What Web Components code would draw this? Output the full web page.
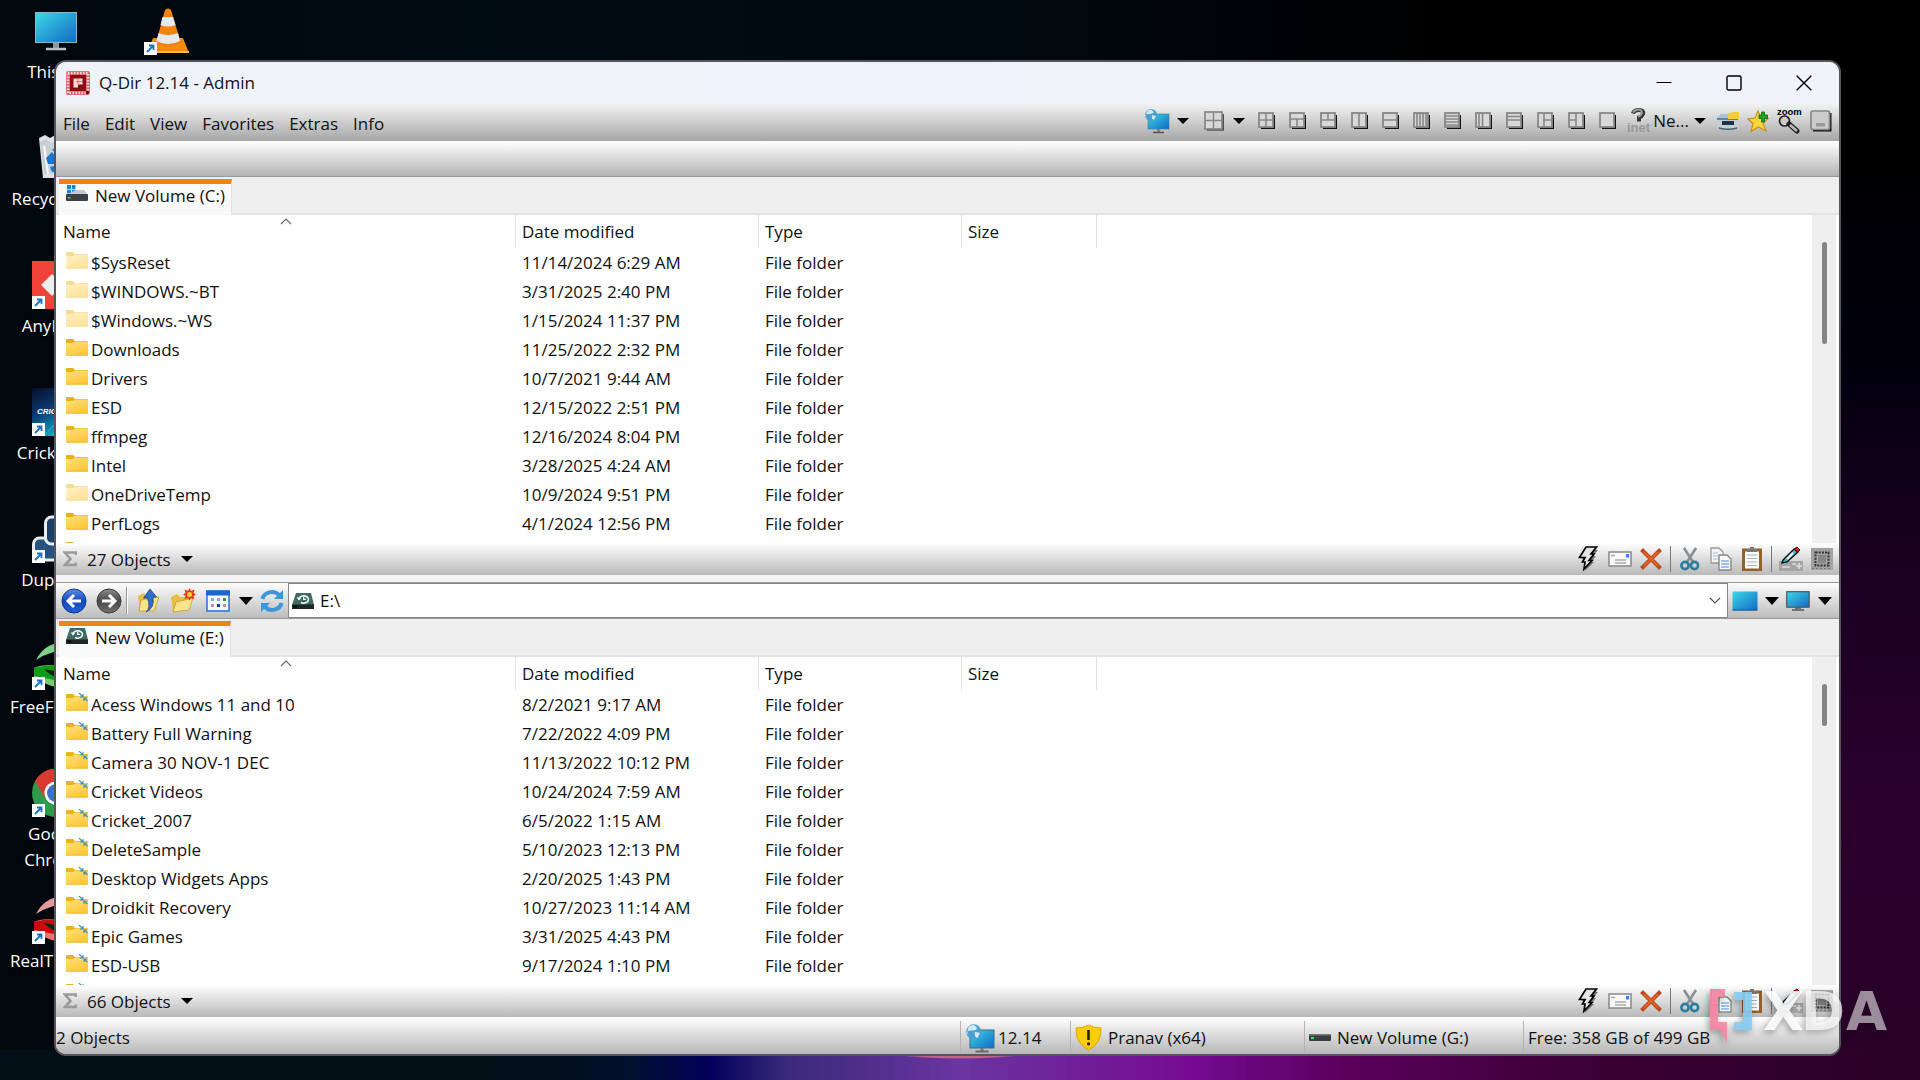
<!DOCTYPE html>
<html lang="en">
<head>
<meta charset="utf-8">
<title>Q-Dir 12.14 - Admin</title>
<style>
  html, body { margin: 0; height: 100%; }
  body { font: 17px/26px "Open Sans", "Noto Sans", sans-serif; color: #111; background: #000; overflow: hidden; }
</style>
</head>
<body>
<q-desktop>
  <q-shortcut icon="pc">This PC</q-shortcut>
  <q-shortcut icon="bin">Recycle Bin</q-shortcut>
  <q-shortcut icon="anydesk" linked>AnyDesk</q-shortcut>
  <q-shortcut icon="cricket" linked>Cricket 07</q-shortcut>
  <q-shortcut icon="dup" linked>Duplicati</q-shortcut>
  <q-shortcut icon="syncgreen" linked>FreeFileSync</q-shortcut>
  <q-shortcut icon="chrome" linked>Google Chrome</q-shortcut>
  <q-shortcut icon="syncred" linked>RealTimeSync</q-shortcut>
  <q-shortcut icon="vlc" linked></q-shortcut>
  <q-window slot="window" heading="Q-Dir 12.14 - Admin">
    <q-pane volume="New Volume (C:)" icon="drivec" count="27 Objects" list="c" thumb="102"></q-pane>
    <q-address path="E:\"></q-address>
    <q-pane volume="New Volume (E:)" icon="drivee" count="66 Objects" list="e" thumb="42"></q-pane>
  </q-window>
  <q-watermark slot="overlay"></q-watermark>
</q-desktop>

<script>
const SHADOW = '#111';
const lay = inner => [17, 17, `<path d="M3 16.200H16.200V3" fill="none" stroke="${SHADOW}" stroke-width="1.800"/><rect x="1" y="1" width="14" height="14" fill="#d8d8d8" stroke="#888" stroke-width="1.800"/><path d="${inner}" stroke="#888" stroke-width="1.600" fill="none"/>`];
const folder = (a, b, t, extra = '') => [22, 20, `<defs><linearGradient id="f" x2=".6" y2="1"><stop stop-color="${a}"/><stop offset="1" stop-color="${b}"/></linearGradient></defs><path d="M0 1.500Q0 1 1 1H7L9 3H22V8H0Z" fill="${t}"/><path d="M0 5H7L9 3.500H22V17.500H0Z" fill="url(#f)"/><path d="M0 17.200H22" stroke="${t}" stroke-width=".8"/>${extra}`];
const screen = `<defs><linearGradient id="s" x2="1" y2="1"><stop stop-color="#3cd8e6"/><stop offset="1" stop-color="#1268c4"/></linearGradient></defs>`;
const driveE = `<path d="M4 2H19L22 14H0Z" fill="#3f6b62"/><path d="M0 13.500H22V18H0Z" fill="#1d2623"/><path d="M1.500 15.500H5" stroke="#000" stroke-width="1.500"/><path d="M7 7.500a4.800 3.700 0 1 1 2 4" fill="none" stroke="#fff" stroke-width="1.500"/><path d="M4.500 6.500L7 9.500L9.500 6.800Z" fill="#fff"/><path d="M11.700 5.500V8.300H14" fill="none" stroke="#fff" stroke-width="1.200"/>`;
const globe = `<circle cx="7" cy="7" r="6" fill="#4a9ed0"/><path d="M3 3Q7 0 9 3T5 6T3 10Q1 7 3 3ZM8 7L12 8L10 12Q7 11 8 7Z" fill="#cfeaf6"/>`;
const eye = (a, b, c) => [48, 48, `<path d="M4 18Q12 2 30 0H48V8Q22 6 4 18Z" fill="${b}"/><path d="M2 26Q14 20 46 26V46Q20 48 2 36Z" fill="${a}"/><path d="M2 26Q24 20 46 26L22 38L2 34Z" fill="${c}"/><path d="M12 27L28 30V36Q18 34 12 27Z" fill="#021"/>`];
const ICONS = {
  pc: [48, 48, `${screen}<path d="M21 34h6v7h-6z" fill="#8a969e"/><rect x="3.500" y="5.500" width="41" height="30" fill="url(#s)" stroke="#8fb4c4"/><path d="M14 42H34" stroke="#b9c0c4" stroke-width="2.500"/>`],
  bin: [48, 48, `<path d="M7 4L13 1L18 4L25 0L32 4L41 2L44 8L39 44H11Z" fill="#dfe3e6"/><path d="M8 8L14 5L20 9L28 5L40 8L37 40H12Z" fill="#c9cfd4"/><path d="M12 12L16 40M25 10V18M36 12L34 38" stroke="#f8f8f8" stroke-width="2"/><path d="M14 24l6-6 5 6-3 6h-6zM18 33l8-2 3 6-9 1zM28 20l7 3-2 8-6-3zM20 16l5-4 5 4-3 4z" fill="#1976cf"/>`],
  anydesk: [48, 48, `<path d="M0 0H48V48H0Z" fill="#f0433a"/><path d="M20 13L31 24L20 35L9 24Z" fill="#eee"/><path d="M27 13L38 24L27 35L33 24Z" fill="#eee"/>`],
  cricket: [48, 48, `<defs><linearGradient id="k" x2=".5" y2="1"><stop stop-color="#060d28"/><stop offset=".5" stop-color="#0b3c74"/><stop offset="1" stop-color="#0fb0c8"/></linearGradient></defs><path d="M0 0H48V48H0Z" fill="url(#k)"/><path d="M12 48Q28 26 48 30M20 48Q32 36 48 40" stroke="#2adfe0" fill="none" opacity=".6"/><text x="5" y="26" font-family="Liberation Sans" font-size="8" font-weight="700" font-style="italic" fill="#fff">CRICKET</text>`],
  dup: [48, 48, `<rect x="1.500" y="23" width="34" height="22" rx="6" fill="#27527e" stroke="#e8edf4" stroke-width="3"/><rect x="13.500" y="2" width="33" height="27" rx="6" fill="#1e4066" stroke="#e8edf4" stroke-width="3"/>`],
  syncgreen: eye('#78c878', '#7fcf84', '#0d9a14'),
  syncred: eye('#ee7474', '#e49a9a', '#c40a0a'),
  chrome: [48, 48, `<circle cx="24" cy="24" r="24" fill="#2e9a4a"/><path d="M3 12A24 24 0 0 1 45 12L24 24L13 29Z" fill="#d93a32"/><path d="M45 12A24 24 0 0 1 24 48L34 28L24 13Z" fill="#fbc116"/><circle cx="24" cy="24" r="11.500" fill="#fff"/><circle cx="24" cy="24" r="9" fill="#3a6fd8"/>`],
  vlc: [48, 48, `<path d="M9 31H39L45 46H3Z" fill="#f08a10"/><path d="M3 44H45V46H3Z" fill="#ffc030"/><path d="M21 3Q24 0 27 3L37 36Q24 43 12 36Z" fill="#f5820a"/><path d="M18.500 10H29L31.500 18Q24 21 16.500 18Z" fill="#e6e9ee"/><path d="M14.500 26Q24 30 34 26L36 34Q24 40 12.500 34Z" fill="#e6e9ee"/>`],
  link: [13, 13, `<path d="M0 0H13V13H0Z" fill="#fff"/><path d="M3 10L9 4M5 3.500H9.500V8" fill="none" stroke="#1673c8" stroke-width="1.800"/>`],
  app: [24, 24, `<rect width="24" height="24" rx="2" fill="#e4606a"/><rect x="2" y="2" width="20" height="20" fill="none" stroke="#ffd8d8" stroke-width="2.500" stroke-dasharray="1.500 1.500"/><rect x="4" y="4" width="16" height="16" fill="#8c0d15"/><path d="M7.500 7.500H16.500V13.500H12V16.500H7.500Z" fill="#ffd9d9"/><path d="M10 10.500H16M12 8V13" stroke="#e06a70"/><circle cx="21.500" cy="21.500" r="1.800" fill="#70000a"/>`],
  min: [16, 16, `<path d="M.5 7.500H15.500" stroke="#000" stroke-width="1"/>`],
  max: [16, 16, `<rect x="1" y="1" width="14" height="14" rx="1.500" fill="none" stroke="#000" stroke-width="1.400"/>`],
  close: [16, 16, `<path d="M.7.7L15.300 15.300M15.300.7L.7 15.300" stroke="#000" stroke-width="1.400"/>`],
  down: [12, 6, `<path d="M0 0H12L6 6Z" fill="#000"/>`],
  bigdown: [14, 8, `<path d="M0 0H14L7 8Z" fill="#000"/>`],
  chev: [12, 7, `<path d="M1 1L6 6L11 1" fill="none" stroke="#555" stroke-width="1.200"/>`],
  sort: [12, 7, `<path d="M1 6L6 1L11 6" fill="none" stroke="#666" stroke-width="1.100"/>`],
  netpc: [26, 26, `${screen}<rect x="4" y="6" width="21" height="15" fill="url(#s)" stroke="#3b7fa0" stroke-width=".6"/><path d="M14.500 21V24" stroke="#777" stroke-width="2.500"/><path d="M9 24.500H20" stroke="#555" stroke-width="1.300"/>${globe}`],
  netpcbig: [30, 30, `${screen}<rect x="5" y="7" width="24" height="18" fill="url(#s)" stroke="#3b6f90" stroke-width="1"/><path d="M17 25V28" stroke="#777" stroke-width="3"/><path d="M10.500 28.500H23.500" stroke="#666" stroke-width="2"/><g transform="scale(1.25)">${globe}</g>`],
  quad: [20, 20, `<path d="M3 18.700H19V3" fill="none" stroke="#222" stroke-width="1.500"/><rect x="1" y="1" width="17" height="17" fill="#d8d8d8" stroke="#888" stroke-width="1.700"/><path d="M9.500 1V18M1 9.500H18" stroke="#888" stroke-width="1.500"/>`],
  l0: lay('M8 1V15M1 8H15'), l1: lay('M1 7H15M8 7V15'), l2: lay('M1 8H15M8 1V8'), l3: lay('M8 1V15'),
  l4: lay('M1 8H15'), l5: lay('M4 1V15M7 1V15M10 1V15M13 1V15'), l6: lay('M1 4H15M1 7H15M1 10H15M1 13H15'),
  l7: lay('M4 1V15M7.500 1V15'), l8: lay('M1 4.500H15M1 8H15'), l9: lay('M7 1V15M7 8H15'), l10: lay('M8 1V15M1 8H8'), l11: lay('M1 1'),
  inet: [24, 26, `<path d="M6 5.500Q7 2 12 2Q17 2 16 6Q15 8.500 12 9.500V13.500" fill="none" stroke="#333" stroke-width="4"/><path d="M6 4.500Q8 1.500 12 1.500Q15 2 15 5Q14 8 11 9" fill="none" stroke="#999" stroke-width="2"/><text x="0" y="24" font-family="Liberation Sans" font-size="13" font-weight="700" fill="#999">inet</text>`],
  layers: [24, 22, `<path d="M1 8L5 4H20L22 8Z" fill="#a9c2d4"/><path d="M1 8H22V10H1Z" fill="#5c86a8"/><path d="M3 10H21L23 16Q20 20 12 19.500Q4 20 1 16Z" fill="#c3ced6"/><path d="M3 18Q12 20.500 21 18" stroke="#49606f" fill="none" stroke-width="1.500"/><rect x="6" y="11" width="12" height="4" fill="#1d3548"/><path d="M12 3H15L16 2H23V9H12Z" fill="#fbc93a"/>`],
  star: [24, 24, `<path d="M11 2L14 9L21 9.500L16 14.500L19 22L11.500 18L4 22.500L6 14.500L1 10L8 9Z" fill="#fbd33c" stroke="#c89018" stroke-width="1.200"/><path d="M12 6H14.500V3H17.500V6H20.500V9.500H17.500V13H14.500V9.500H12Z" fill="#1fa51f" stroke="#086a08" stroke-width=".8"/>`],
  zoom: [26, 26, `<text x="0" y="7" font-family="Liberation Sans" font-size="9.500" font-weight="700" fill="#000">zoom</text><circle cx="7.500" cy="13" r="5" fill="#ccc" stroke="#222" stroke-width="1.700"/><path d="M12 16L20 23" stroke="#222" stroke-width="5" stroke-linecap="round"/><path d="M13 17L20 23" stroke="#bbb" stroke-width="2.500"/>`],
  tray: [22, 22, `<path d="M3 20.500H20.500V3" fill="none" stroke="#111" stroke-width="2"/><rect x="1" y="1" width="18.500" height="18.500" rx="2" fill="#ccc" stroke="#888" stroke-width="1.700"/><path d="M6 13H15V16.500H6Z" fill="#999"/>`],
  drivec: [22, 20, `<path d="M1 1H5V5H1ZM5.800 1H9.500V5H5.800ZM1 5.800H5V9.500H1ZM5.800 5.800H9.500V9.500H5.800Z" fill="#1687d8"/><path d="M10 6H18L22 11H0Z" fill="#c4c8cc"/><rect y="10" width="22" height="7" rx="1" fill="#3c4043"/><rect x="2" y="13" width="2.500" height="1.500" fill="#5fd070"/>`],
  drivee: [22, 20, driveE],
  driveg: [22, 10, `<rect y="1" width="22" height="7" rx="1" fill="#3c3f42"/><rect x="0" y="1" width="22" height="1.500" fill="#777"/><rect x="2" y="4" width="3" height="2" fill="#3fe060"/>`],
  folder: folder('#ffe082', '#ffc738', '#e9b21c'),
  faded: folder('#fff0c4', '#ffe39a', '#f5dc96'),
  packed: folder('#ffe07e', '#ffc838', '#eab320', `<path d="M13 0L16.500 3.500M17 1V4H14M21.500 8L18.500 5.500M18 8V5H21" fill="none" stroke="#3e8fb0" stroke-width="1.100"/>`),
  sigma: [14, 16, `<path d="M13 4V1.500H2L7.500 8L2 14H13V11.500" fill="none" stroke="#9a9a9a" stroke-width="2.600"/>`],
  bolt: [22, 26, `<path d="M10 3L20 4L15 10H18L13 16H16L7 25L9 17H7L9 13H4Z" fill="#777"/><path d="M8 1H18.500L13 8H16L11 14.500H14L6 23L7 16H4.500L7 11.500H1.500Z" fill="#e6e6e6" stroke="#000" stroke-width="1.700"/>`],
  mail: [24, 16, `<rect x="1" y="1" width="22" height="14" fill="#f8f8f8" stroke="#888" stroke-width="1.500"/><rect x="18" y="3" width="3" height="3.500" fill="#2f86e0"/><path d="M3 4.500H7M7 9H18M7 12H18" stroke="#aaa" stroke-width="1.300"/>`],
  del: [22, 22, `<path d="M1.500 1.500L20.500 20.500M20.500 1.500L1.500 20.500" stroke="#b94d22" stroke-width="4"/><path d="M4 4L18 18M18 4L4 18" stroke="#dd6226" stroke-width="2"/>`],
  cut: [20, 24, `<path d="M4 1L13 15M16 1L7 15" stroke="#8a8f94" stroke-width="2.600"/><circle cx="5" cy="18.500" r="3.600" fill="none" stroke="#2a7d9e" stroke-width="2.600"/><circle cx="14.500" cy="18.500" r="3.600" fill="none" stroke="#2a7d9e" stroke-width="2.600"/>`],
  copy: [22, 24, `<path d="M1 1H9L13 5V16H1Z" fill="#f4f4f4" stroke="#999" stroke-width="1.300"/><path d="M3 6H8M3 9H8M3 12H8" stroke="#9cc0e8"/><path d="M9 8H17L21 12V23H9Z" fill="#fafafa" stroke="#888" stroke-width="1.400"/><path d="M11 14H19M11 17H19M11 20H19" stroke="#4a86dc" stroke-width="1.200"/>`],
  paste: [20, 24, `<rect x="1.500" y="3" width="17" height="20" fill="#fcfcfc" stroke="#96602c" stroke-width="3"/><path d="M5 8H15M5 11.500H15M5 15H15M5 18.500H15" stroke="#9cb4cc" stroke-width="1.200"/><path d="M5 2H8V0H12V2H15V5H5Z" fill="#777"/>`],
  pen: [24, 26, `<path d="M0 15H24V25H0Z" fill="#a4a4a4"/><path d="M3 21H11M13 18H17M20 17V23M17 20H23" stroke="#ddd" stroke-width="1.500"/><path d="M4 14L15 3L19 6L8 16L3 17Z" fill="#4ab4c8" stroke="#000" stroke-width="1.300"/><path d="M8 13L14 7" stroke="#fff" stroke-width="2"/><path d="M15 3L18 1L21 4L19 6Z" fill="#e02020" stroke="#400" stroke-width="1"/>`],
  select: [22, 22, `<rect width="22" height="22" fill="#a2a2a2"/><rect x="4.500" y="4.500" width="13" height="13" fill="none" stroke="#333" stroke-width="2" stroke-dasharray="2 1.200"/><rect x="7" y="7" width="8" height="8" fill="#858585"/><path d="M1 20.500H21" stroke="#777" stroke-dasharray="2 2"/>`],
  back: [26, 26, `<defs><linearGradient id="b" x2="0" y2="1"><stop stop-color="#5a90e8"/><stop offset=".5" stop-color="#1747b8"/><stop offset="1" stop-color="#1e60d8"/></linearGradient></defs><circle cx="13" cy="13" r="12" fill="url(#b)" stroke="#12358c"/><path d="M20 13H8M13 7L7 13L13 19" fill="none" stroke="#fff" stroke-width="3"/>`],
  fwd: [26, 26, `<defs><linearGradient id="b" x2="0" y2="1"><stop stop-color="#8c8c8c"/><stop offset=".5" stop-color="#484848"/><stop offset="1" stop-color="#707070"/></linearGradient></defs><circle cx="13" cy="13" r="12" fill="url(#b)" stroke="#3c3c3c"/><path d="M6 13H18M13 7L19 13L13 19" fill="none" stroke="#fff" stroke-width="3"/>`],
  up: [24, 26, `<path d="M2 8L8 5L10 8H20V22L4 23Z" fill="#e8bf40"/><path d="M5 12L23 9L18 23H3Z" fill="#fbe48a" stroke="#c89a28" stroke-width=".8"/><path d="M10 24Q15 20 11.500 10H7.500L14 1L20.500 9H17Q19 20 10 24Z" fill="#2e6cc8" stroke="#1c4688" stroke-width=".8"/>`],
  newf: [26, 26, `<path d="M1 9L7 6L10 9H18V22L3 23Z" fill="#e8bf40"/><path d="M6 14L23 10L19 22L3 24Z" fill="#fbe48a" stroke="#c89a28" stroke-width=".8"/><path d="M19.500 0L21 3L24.500 1.500L23.500 5L26 6.500L23.500 8L24.500 11L21 10L19.500 12.500L18 10L14.500 11L15.500 8L13 6.500L15.500 5L14.500 1.500L18 3Z" fill="#e83818"/><circle cx="19.500" cy="6.500" r="2.500" fill="#ffd030"/>`],
  view: [24, 22, `<rect x="1" y="1" width="22" height="20" fill="#f4f8ff" stroke="#2d78d8" stroke-width="1.600"/><path d="M0 3H24" stroke="#1c66d0" stroke-width="5"/><path d="M5 8H8V11H5ZM11 8H14V11H11Z" fill="#8ab0c8"/><path d="M17 8H20V11H17Z" fill="#2fa030"/><path d="M5 14H8V17H5ZM17 14H20V17H17Z" fill="#c89090"/><path d="M11 14H14V17H11Z" fill="#1c3ca8"/>`],
  refresh: [24, 24, `<path d="M2.500 10A9.500 8.500 0 0 1 19 6M21.500 14A9.500 8.500 0 0 1 5 18" fill="none" stroke="#3c96dc" stroke-width="4"/><path d="M23 1V10H14ZM1 23V14H10Z" fill="#3c96dc"/>`],
  desk: [26, 20, `${screen}<rect x=".5" y=".5" width="25" height="19" rx="1" fill="url(#s)"/><path d="M.5 19H25.500" stroke="#0b568c"/>`],
  monitor: [24, 20, `${screen}<rect x=".7" y=".7" width="22.500" height="15.500" fill="url(#s)" stroke="#555" stroke-width="1.200"/><path d="M9 17H15M6 19H18" stroke="#555" stroke-width="1.300"/>`],
  shield: [27, 27, `<path d="M13.500 1Q19 4 26 4Q27 19 13.500 26Q0 19 1 4Q8 4 13.500 1Z" fill="#fccc0c" stroke="#e0a800"/><path d="M13.500 6V16" stroke="#222" stroke-width="2.600"/><circle cx="13.500" cy="19.800" r="1.600" fill="#222"/>`]
};

const define = (name, build) => customElements.define(name, class extends HTMLElement {
  connectedCallback() {
    if (this.shadowRoot) return;
    const t = document.createElement('template');
    t.innerHTML = build(this);
    this.attachShadow({ mode: 'open' }).append(t.content.cloneNode(true));
  }
});
const icon = n => `<q-icon name="${n}"></q-icon>`;
const RESET = `*{box-sizing:border-box} button{font:inherit;color:inherit;background:none;border:0;margin:0;padding:0;display:flex;align-items:center;justify-content:center}`;

define('q-icon', el => {
  const [w, h, body] = ICONS[el.getAttribute('name')];
  return `<style>:host{display:block;flex:none;width:${w}px;height:${h}px}svg{display:block}</style><svg width="${w}" height="${h}" viewBox="0 0 ${w} ${h}" aria-hidden="true">${body}</svg>`;
});

define('q-tool', el => `<style>${RESET}:host{display:flex;flex:none;width:31px}button{width:100%;height:100%}</style>
  <button aria-label="${el.getAttribute('name')}">${icon(el.getAttribute('name'))}</button>`);

define('q-shortcut', el => `<style>
  :host{display:block;width:112px;height:127px;color:#fff;text-align:center}
  a{display:block;color:inherit;text-decoration:none;padding-top:7px}
  .pic{position:relative;width:48px;margin:0 auto 4px}
  .badge{position:absolute;left:0;bottom:0}
  span{display:block;padding:0 10px;text-shadow:0 1px 2px #000}
  </style><a href="#"><div class="pic">${icon(el.getAttribute('icon'))}${el.hasAttribute('linked') ? `<q-icon class="badge" name="link"></q-icon>` : ''}</div><span><slot></slot></span></a>`);

define('q-desktop', () => `<style>
  :host{display:block;position:relative;height:100vh;overflow:hidden;
    background:
      radial-gradient(ellipse 75px 8px at 50% 1px,#c0648c 85%,transparent) bottom/100% 30px no-repeat,
      linear-gradient(90deg,#030f16,#020f18 28%,#021030 33%,#02005a 37%,#3a2a7a 41%,#6a35a0 50%,#750b92 62%,#5a005c 70%,#3c0036 82%,#280026) bottom/100% 30px no-repeat,
      linear-gradient(180deg,#000 15%,#02000e 35%,#18001f 50%,#2a002d 75%,#280026) right/90px 100% no-repeat,
      linear-gradient(90deg,#00070d,#000c14 25%,#00080e 55%,#000 75%)}
  .icons{display:flex;flex-flow:column wrap;height:1016px;align-content:flex-start}
  </style><div class="icons"><slot></slot></div><slot name="window"></slot><slot name="overlay"></slot>`);

define('q-window', el => `<style>${RESET}
  :host{position:absolute;left:54px;right:79px;top:60px;bottom:24px;display:flex;flex-direction:column;box-sizing:border-box;
    border:2px solid #55555b;border-radius:12px;overflow:hidden;background:#efefef}
  .title{display:flex;align-items:center;height:42px;padding-left:10px;background:linear-gradient(90deg,#eef3fa,#f1f2fa)}
  .title b{font-weight:400;margin-left:9px;flex:1}
  .title button{width:70px;height:42px}
  .menu{display:flex;align-items:flex-start;height:37px;padding:0 3px 0 0;background:linear-gradient(#f2f2f4,#d4d4d4 40%,#a6a6a6)}
  nav{display:flex;flex:1}
  nav button{padding:2px 7px 0 8px;height:37px}
  nav button:first-child{padding-left:7px}
  .tools{display:flex;height:33px}
  .tools .w28{width:28px}.tools .w24{width:24px}.tools .w26{width:26px}
  .tools .gap{margin-right:6px}
  .tools button{width:34px}
  .bar{height:36px;background:linear-gradient(#fff,#b4b4b4);border-bottom:1px solid #999}
  ::slotted(q-pane){flex:1 1 0;min-height:0}
  .status{display:flex;height:37px;background:linear-gradient(#fff,#b6b6b6)}
  .status div{display:flex;align-items:center;gap:3px;border-left:1px solid #b4b4b4;padding-left:4px;margin-top:4px}
  .status .first{flex:1;border:0;padding-left:0}
  .w110{width:110px}.w234{width:234px}.w219{width:219px}.w316{width:316px}
  .status .w234,.status .w219{gap:6px}
  </style>
  <div class="title">${icon('app')}<b>${el.getAttribute('heading')}</b>
    <button aria-label="Minimize">${icon('min')}</button><button aria-label="Maximize">${icon('max')}</button><button aria-label="Close">${icon('close')}</button></div>
  <div class="menu"><nav>${['File', 'Edit', 'View', 'Favorites', 'Extras', 'Info'].map(m => `<button>${m}</button>`).join('')}</nav>
    <div class="tools"><q-tool class="w28" name="netpc"></q-tool><q-tool class="w24 gap" name="down"></q-tool><q-tool class="w26" name="quad"></q-tool><q-tool class="w24" name="down"></q-tool>
    ${[...Array(12).keys()].map(i => `<q-tool name="l${i}"></q-tool>`).join('')}
    <q-tool name="inet"></q-tool><button>Ne...</button><q-tool class="w24" name="down"></q-tool>
    <q-tool name="layers"></q-tool><q-tool name="star"></q-tool><q-tool name="zoom"></q-tool><q-tool name="tray"></q-tool></div></div>
  <div class="bar"></div>
  <slot></slot>
  <div class="status"><div class="first">2 Objects</div><div class="w110">${icon('netpcbig')}12.14</div><div class="w234">${icon('shield')}Pranav (x64)</div>
    <div class="w219">${icon('driveg')}New Volume (G:)</div><div class="w316">Free: 358 GB of 499 GB</div></div>`);

define('q-address', el => `<style>${RESET}
  :host{display:block;border-top:7px solid #f4f4f4}
  .row{display:flex;height:37px;border:solid #999;border-width:1px 0;background:linear-gradient(#fdfdfd,#bcbcbc);padding-right:2px}
  .w36{width:36px}.w34{width:34px}.w20{width:20px}.w24{width:24px}
  i{width:2px;margin:4px 2px 4px 0;background:#999;border-right:1px solid #fff}
  label{display:flex;flex:1;align-items:center;gap:6px;background:#fff;border:1px solid #888;padding:0 6px 0 3px;margin-left:1px}
  input{font:inherit;color:inherit;border:0;outline:0;padding:0;background:none;flex:1;min-width:0}
  </style><div class="row"><q-tool class="w36" name="back"></q-tool><q-tool class="w34" name="fwd"></q-tool><i></i><q-tool class="w36" name="up"></q-tool><q-tool class="w34" name="newf"></q-tool>
  <q-tool class="w36" name="view"></q-tool><q-tool class="w20" name="bigdown"></q-tool><q-tool name="refresh"></q-tool>
  <label>${icon('drivee')}<input type="text" aria-label="Address" value="${el.getAttribute('path')}"><button aria-label="History">${icon('chev')}</button></label>
  <q-tool class="w34" name="desk"></q-tool><q-tool class="w20" name="bigdown"></q-tool><q-tool name="monitor"></q-tool><q-tool class="w24" name="bigdown"></q-tool></div>`);

const LISTS = {
  c: [['faded', '$SysReset', '11/14/2024 6:29 AM'], ['faded', '$WINDOWS.~BT', '3/31/2025 2:40 PM'], ['faded', '$Windows.~WS', '1/15/2024 11:37 PM'],
    ['folder', 'Downloads', '11/25/2022 2:32 PM'], ['folder', 'Drivers', '10/7/2021 9:44 AM'], ['folder', 'ESD', '12/15/2022 2:51 PM'],
    ['folder', 'ffmpeg', '12/16/2024 8:04 PM'], ['folder', 'Intel', '3/28/2025 4:24 AM'], ['faded', 'OneDriveTemp', '10/9/2024 9:51 PM'],
    ['folder', 'PerfLogs', '4/1/2024 12:56 PM'], ['folder', '', '']],
  e: [['packed', 'Acess Windows 11 and 10', '8/2/2021 9:17 AM'], ['packed', 'Battery Full Warning', '7/22/2022 4:09 PM'], ['packed', 'Camera 30 NOV-1 DEC', '11/13/2022 10:12 PM'],
    ['packed', 'Cricket Videos', '10/24/2024 7:59 AM'], ['packed', 'Cricket_2007', '6/5/2022 1:15 AM'], ['packed', 'DeleteSample', '5/10/2023 12:13 PM'],
    ['packed', 'Desktop Widgets Apps', '2/20/2025 1:43 PM'], ['packed', 'Droidkit Recovery', '10/27/2023 11:14 AM'], ['packed', 'Epic Games', '3/31/2025 4:43 PM'],
    ['packed', 'ESD-USB', '9/17/2024 1:10 PM'], ['packed', '', '']]
};

define('q-list', el => `<style>*{box-sizing:border-box}
  :host{display:flex;background:#fff;overflow:hidden;padding:0 3px 0 1px}
  .view{flex:1;overflow:hidden}
  table{width:100%;table-layout:fixed;border-collapse:separate;border-spacing:0}
  th,td{padding:0 0 0 6px;text-align:left;font-weight:400;white-space:nowrap}
  th{height:33px;border-right:1px solid #e2e2e2;position:relative}
  th:last-child{border:0}
  td{height:29px}
  td:first-child{padding-left:9px}
  .name{display:flex;align-items:center;gap:3px;height:29px}
  .name q-icon{margin-bottom:4px}
  .sort{position:absolute;left:calc(50% - 6px);top:3px}
  .c1{width:459px}.c2{width:243px}.c3{width:203px}.c4{width:135px}
  .bar{width:24px;background:#efefef;padding:27px 9px 0 10px}
  .thumb{width:5px;border-radius:3px;background:#858585;height:${el.getAttribute('thumb')}px}
  </style><div class="view"><table><colgroup><col class="c1"><col class="c2"><col class="c3"><col class="c4"><col></colgroup>
  <thead><tr><th>Name<q-icon class="sort" name="sort"></q-icon></th><th>Date modified</th><th>Type</th><th>Size</th><th></th></tr></thead>
  <tbody>${LISTS[el.getAttribute('list')].map(([k, n, d]) => `<tr><td><div class="name">${icon(k)}${n}</div></td><td>${d}</td><td>${n && 'File folder'}</td><td></td><td></td></tr>`).join('')}</tbody></table></div>
  <div class="bar"><div class="thumb"></div></div>`);

define('q-pane', el => `<style>${RESET}
  :host{display:flex;flex-direction:column}
  .tabs{height:38px;padding:2px 0 0 3px;background:#efefef;border-bottom:2px solid #e3e3e3;display:flex;flex:none}
  .tab{height:36px;border-top:5px solid #f5820b;background:#f9f9f9;padding:0 6px 7px 7px;gap:7px;border-right:1px solid #e2e2e2;margin-bottom:-2px}
  .tab q-icon{margin-bottom:4px}
  q-list{flex:1;min-height:0}
  .foot{height:32px;flex:none;display:flex;padding-right:2px;background:linear-gradient(#fff,#b9b9b9)}
  .count{gap:10px;padding:2px 0 0 7px;margin-right:auto}
  .count q-icon{margin-bottom:2px}
  i{width:8px;flex:none;background:linear-gradient(#777,#777) center/1px 26px no-repeat}
  </style>
  <div class="tabs"><button class="tab">${icon(el.getAttribute('icon'))}${el.getAttribute('volume')}</button></div>
  <q-list list="${el.getAttribute('list')}" thumb="${el.getAttribute('thumb')}"></q-list>
  <div class="foot"><button class="count">${icon('sigma')}<span>${el.getAttribute('count')}</span>${icon('down')}</button>
  ${['bolt', 'mail', 'del'].map(n => `<q-tool name="${n}"></q-tool>`).join('')}<i></i>${['cut', 'copy', 'paste'].map(n => `<q-tool name="${n}"></q-tool>`).join('')}<i></i>${['pen', 'select'].map(n => `<q-tool name="${n}"></q-tool>`).join('')}</div>`);

define('q-watermark', () => `<style>:host{position:absolute;right:20px;bottom:20px;filter:drop-shadow(-2px 3px 3px rgba(0,0,0,.35));pointer-events:none}svg{display:block;overflow:visible}</style>
  <svg width="200" height="76" viewBox="0 0 200 76" aria-label="XDA">
  <path d="M10 5H25V13H18V38H27V59L20 46H10Z" fill="#f48aa4" opacity=".9"/>
  <path d="M34 8H52V46H34V38H43V16H34Z" fill="#86cdf2" opacity=".9"/>
  <g font-family="DejaVu Sans" font-size="53" font-weight="700" fill="#fff"><text x="63" y="46" opacity=".88">X</text><text x="101" y="46" opacity=".72">D</text><text x="146" y="46" opacity=".55">A</text></g></svg>`);
</script>
</body>
</html>
